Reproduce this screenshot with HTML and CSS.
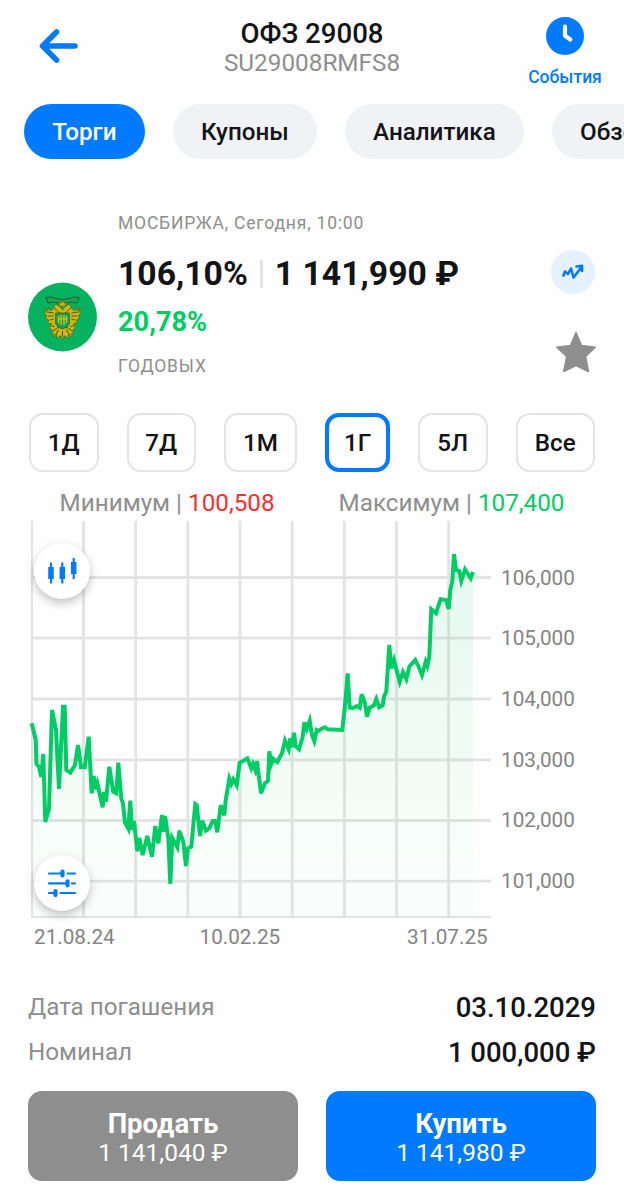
FILE: index.html
```
<!DOCTYPE html>
<html lang="ru">
<head>
	<meta charset="utf-8">
	<title>ОФЗ 29008</title>
	<link rel="stylesheet" href="styles.css">
</head>
<body>

	<div class="header">
		<a class="back">
			<svg width="40" height="36" viewBox="0 0 40 36"><path d="M37 18H5M18.500 4L4.500 18L18.500 32" /></svg>
		</a>
		<div class="title">
			<h1>ОФЗ 29008</h1>
			<p>SU29008RMFS8</p>
		</div>
		<a class="events">
			<svg width="38" height="38" viewBox="0 0 38 38"><circle cx="19" cy="19" r="19"/><path d="M19 9.700V18.700L24.300 22.500"/></svg>
			<span>События</span>
		</a>
	</div>

	<div class="tabs">
		<a class="tab active">Торги</a>
		<a class="tab">Купоны</a>
		<a class="tab">Аналитика</a>
		<a class="tab">Обзор</a>
	</div>

	<div class="quote">
		<svg class="emblem" width="69" height="70" viewBox="0 0 70 70">
			<circle class="disc" cx="35" cy="35" r="35"/>
			<!-- ribbon -->
			<path class="ribbon" d="M18 15.500Q23 13.500 27 16Q35 18.500 43 16Q47 13.500 52 15.500L49.500 21Q45 19 42 20.500Q35 22 28 20.500Q25 19 20.500 21Z"/>
			<!-- wings -->
			<path class="gold" d="M31 29L26 26L23 29L21 25L20 29L17 25L18 30L16.500 31L19 34L17.500 36L21 38L20 41L24 42L22 46L25 49L30 46Z"/>
			<path class="gold" d="M39 29L44 26L47 29L49 25L50 29L53 25L52 30L53.500 31L51 34L52.500 36L49 38L50 41L46 42L48 46L45 49L40 46Z"/>
			<!-- heads and crown -->
			<path class="gold" d="M34 32L30 29L26 25L28 22L32 24L35 28L38 24L42 22L44 25L40 29L36 32Z"/>
			<path class="gold" d="M31 20L33 21L35 18.500L37 21L39 20L38 24H32Z"/>
			<!-- tail -->
			<path class="gold" d="M30 46L23 51L26 52L25 55L29 53L29 57L33 54L35 58L37 54L41 57L41 53L45 55L44 52L47 51L40 46Z"/>
			<!-- shield -->
			<path class="shield" d="M28 31H42V42Q41 45 35 47Q29 45 28 42Z"/>
			<path class="marks" d="M31 34V41M33.500 33V43M36.500 33V43M39 34V41M30 37H40"/>
			<path class="feathers" d="M19 30L26 31M20 34L26 34M22 38L26 37M51 30L44 31M50 34L44 34M48 38L44 37M31 48L28 53M35 49V55M39 48L42 53M24 44L27 45M46 44L43 45"/>
		</svg>
		<div class="info">
			<p class="place">МОСБИРЖА, Сегодня, 10:00</p>
			<p class="price"><span>106,10%</span><i class="bar"></i><span>1 141,990 ₽</span></p>
			<p class="yield">20,78%</p>
			<p class="annual">ГОДОВЫХ</p>
		</div>
		<div class="actions">
			<a class="trend">
				<svg width="22" height="16" viewBox="0 0 22 16"><path d="M1.500 11.500L3 7.500L6 10L9 4.500L11.500 13.500L20 2.500M14.500 2.500L20 1.800L20 7"/></svg>
			</a>
			<svg class="star" width="42" height="42" viewBox="0 0 42 42"><path d="M21 1.500L26.500 14.500L40.200 16.200L30.500 25.500L33.500 40.500L21 34.500L8.700 40.500L11.700 25.500L1.800 16.200L15.500 14.500Z"/></svg>
		</div>
	</div>

	<div class="periods">
		<a>1Д</a>
		<a>7Д</a>
		<a>1М</a>
		<a class="active">1Г</a>
		<a>5Л</a>
		<a>Все</a>
	</div>

	<div class="limits">
		<p>Минимум | <span class="red">100,508</span></p>
		<p>Максимум | <span class="green">107,400</span></p>
	</div>

	<div class="chart">
		<svg width="624" height="440" viewBox="0 520 624 440">
			<defs>
				<linearGradient id="fade" gradientUnits="userSpaceOnUse" x1="0" y1="554" x2="0" y2="917">
					<stop offset="0" stop-color="#0c6" stop-opacity=".1"/>
					<stop offset="1" stop-color="#0c6" stop-opacity=".01"/>
				</linearGradient>
			</defs>
			<path class="grid" d="M83.500 521V916M135.700 521V916M187.800 521V916M240 521V916M292.200 521V916M344.400 521V916M396.500 521V916M448.600 521V916M32 577.500H491M32 638.200H491M32 699H491M32 759.800H491M32 820.500H491M32 881.200H491"/>
			<path class="frame" d="M32 521V917H491"/>
			<path class="area" id="area"/>
			<polyline class="line" id="line" points="31.700,723.300 35.700,740 36.500,764 39,766.700 41.300,776.700 43.300,754 45.300,822 49,809 52,710 56,730 59,789 63,706.700 64.700,706.700 66.300,770 70.300,772.700 75,765 78,745 81,767.300 84.700,767.300 88.700,736.700 91.700,793.300 93.700,776 95.300,789.300 97.300,783.300 102.700,807.300 104,792 106,801.700 109.300,766.700 113.300,791.700 116.300,793.300 118.300,762.700 121.300,798.300 123,803.300 125,822.700 128.300,828.700 130.300,800.700 132,830 134,821 137.300,851.300 139.300,838 142.700,855 147.300,836 152,856.700 155.300,826 158.300,843.300 162,815 163.300,831.700 165,816 168.300,838 170.300,884 172.300,838 177.300,847.300 179.300,830.700 183.300,841.700 186,866 188,848.300 191.300,846.700 195.300,804 196.700,805 200,836 202.300,820.700 206,830.700 209.300,828.300 212.700,821 215,821 217.300,832.300 220.700,805.300 224.300,815.300 225.700,800 229.300,778.700 231.300,784 233.300,779.300 236.700,785.300 239.700,762.700 243.300,760.700 247.300,758.300 251.300,768.300 253,764 255.300,770 257,761 261,793.300 265,783.300 268,780.700 269.300,751.300 271.300,764 273.300,758.700 277.300,762 282,753.300 285,740.700 288.700,749.300 290.300,738.300 292,747.300 294,732.700 295.700,746 299,749.300 302.700,736.700 304.300,722.300 306.700,729 309.700,720.700 312,735 314.300,741 316.700,730 318.500,731 321.700,728.700 325,727.300 327.700,729.300 342.300,730 344.700,708.300 347.700,673.300 349.700,707.700 353.300,708 356.700,706 359.700,707.700 361.700,694.300 365,703.300 367,716.700 369.700,707.700 374,705.300 376.300,699 379.300,707.300 382.700,705.300 384,696.700 386.300,691.700 389.300,645 391.300,668.300 394,660 397,671.700 399.700,681.700 403,672 406.300,679 409.300,666.700 415.300,660 418.700,666.700 422,675 425.700,661.700 427.300,665.700 429.300,656.700 431.300,609.300 436,613.300 438.300,606 440.700,599.300 446,600 448.700,609 450.300,590 452.300,581.700 454,554 456,570 459.300,571 461.300,580.700 465,569.300 470.700,578.300 473,572"/>
			<g class="axis">
				<text x="501" y="584.500">106,000</text>
				<text x="501" y="645.200">105,000</text>
				<text x="501" y="706">104,000</text>
				<text x="501" y="766.700">103,000</text>
				<text x="501" y="827.400">102,000</text>
				<text x="501" y="888">101,000</text>
				<text x="34" y="944">21.08.24</text>
				<text x="199.500" y="944">10.02.25</text>
				<text x="407" y="944">31.07.25</text>
			</g>
		</svg>
		<a class="round candles">
			<svg width="30" height="28" viewBox="0 0 30 28"><path d="M4 5.500V26.500M15.300 5.500V26.500M26.700 1V22"/><path class="body" d="M4 10V22M15.300 10V22M26.700 5V17"/></svg>
		</a>
		<a class="round settings">
			<svg width="28" height="28" viewBox="0 0 28 28"><path d="M1 4.500H14M19.500 4.500H27M1 14.300H18M24 14.300H27M1 24H7M12.500 24H27"/><path class="knob" d="M14.500 2.500V6.500M19.500 12.300V16.300M7.500 22V26"/></svg>
		</a>
	</div>

	<div class="details">
		<p><span>Дата погашения</span><b>03.10.2029</b></p>
		<p><span>Номинал</span><b>1 000,000 ₽</b></p>
	</div>

	<div class="buttons">
		<a class="btn sell"><b>Продать</b><span>1 141,040 ₽</span></a>
		<a class="btn buy"><b>Купить</b><span>1 141,980 ₽</span></a>
	</div>

<script>
	// close the line down to the bottom axis to get the filled area
	var pts = document.getElementById("line").getAttribute("points")
	document.getElementById("area").setAttribute("d", "M" + pts + " 473,917 32,917Z")
</script>
</body>
</html>
```
FILE: styles.css
```
*{
	box-sizing: border-box;
}
body{
	margin: 0;
	width: 624px;
	height: 1200px;
	overflow: hidden;
	background-color: #fefefe;
	color: #131416;
	font-family: Roboto, "Liberation Sans", sans-serif;
}
h1, p{
	margin: 0;
}
svg{
	display: block;
	fill: none;
}
.header{
	display: grid;
	grid-template-columns: 100px 1fr 100px;
	height: 103.5px;
	padding: 16.5px 9px 0 13px;
}
.back{
	padding: 11px 0 0 25px;
}
.back path{
	stroke: #007aff;
	stroke-width: 5.5;
	stroke-linecap: round;
	stroke-linejoin: round;
}
.title{
	text-align: center;
	padding: 2px 4px 0 0;
}
.title h1{
	font-size: 27.6px;
	font-weight: 500;
	line-height: 30px;
}
.title p{
	font-size: 24.3px;
	line-height: 27px;
	color: #8e8e8e;
}
.events{
	display: flex;
	flex-direction: column;
	align-items: center;
	color: #007aff;
	font-size: 17.5px;
	font-weight: 500;
	line-height: 20px;
	gap: 12px;
}
.events circle{
	fill: #007aff;
}
.events path{
	stroke: #fff;
	stroke-width: 4.2;
	stroke-linecap: round;
	stroke-linejoin: round;
}
.tabs{
	display: flex;
	gap: 28px;
	padding-left: 24px;
	overflow: hidden;
}
.tab{
	flex: none;
	height: 55.5px;
	padding: 0 28.2px;
	border-radius: 28px;
	background-color: #f1f2f6;
	font-size: 24.2px;
	font-weight: 500;
	line-height: 56px;
}
.tab.active{
	background-color: #007aff;
	color: #fff;
}
.quote{
	display: flex;
	height: 254px;
	padding: 52px 27px 0 28px;
}
.emblem{
	margin-top: 71px;
}
.disc{
	fill: #06b25f;
}
.gold{
	fill: #d2b414;
	stroke: #4b6b18;
	stroke-width: .8;
}
.ribbon{
	fill: #25a04c;
	stroke: #145c38;
	stroke-width: 1;
}
.shield{
	fill: #14a44f;
	stroke: #37661c;
	stroke-width: .8;
}
.marks{
	stroke: #d8bd20;
	stroke-width: 1.3;
}
.feathers{
	stroke: #46661a;
	stroke-width: 1.1;
}
.info{
	flex: 1;
	padding-left: 21px;
}
.place, .annual{
	font-size: 17.5px;
	line-height: 24px;
	letter-spacing: 0.8px;
	color: #8e8e8e;
}
.price{
	display: flex;
	align-items: center;
	height: 40px;
	margin-top: 18px;
	font-size: 33.7px;
	font-weight: 700;
	white-space: nowrap;
}
.bar{
	width: 3px;
	height: 28px;
	margin: 2px 12px 0 12px;
	background-color: #e4e4e4;
}
.yield{
	margin-top: 13px;
	color: #00cc66;
	font-size: 27.2px;
	font-weight: 700;
	line-height: 32px;
}
.annual{
	margin-top: 16px;
}
.actions{
	display: flex;
	flex-direction: column;
	align-items: flex-end;
	padding-top: 39px;
}
.trend{
	display: flex;
	align-items: center;
	justify-content: center;
	width: 44px;
	height: 44px;
	margin-right: 2px;
	border-radius: 50%;
	background-color: #e5f1fe;
}
.trend path{
	stroke: #007aff;
	stroke-width: 2.6;
	stroke-linejoin: round;
	stroke-linecap: round;
}
.star{
	margin-top: 37px;
}
.star path{
	fill: #8e8e8e;
	stroke: #8e8e8e;
	stroke-width: 1.5;
	stroke-linejoin: round;
}
.periods{
	display: grid;
	grid-template-columns: 69.5px 69.5px 73px 65px 69.5px 79.5px;
	gap: 28px;
	padding-left: 29px;
}
.periods a{
	height: 59px;
	border: 2px solid #e4e4e4;
	border-radius: 14px;
	text-align: center;
	font-size: 24.2px;
	font-weight: 500;
	line-height: 56px;
}
.periods a.active{
	border: 4px solid #007aff;
	line-height: 52px;
}
.limits{
	display: flex;
	justify-content: space-between;
	height: 48px;
	padding: 16px 59.5px 0 59.5px;
	color: #8e8e8e;
	font-size: 24.25px;
	line-height: 30px;
}
.red{
	color: #f5302f;
}
.green{
	color: #00cc66;
}
.chart{
	position: relative;
}
.grid{
	stroke: #e3e3e3;
	stroke-width: 2.8;
}
.frame{
	stroke: #e3e3e3;
	stroke-width: 2;
}
.area{
	fill: url(#fade);
}
.line{
	stroke: #00cc66;
	stroke-width: 4;
}
.axis{
	fill: #848484;
	font-size: 20.7px;
}
.round{
	position: absolute;
	left: 34px;
	display: flex;
	align-items: center;
	justify-content: center;
	width: 56px;
	height: 56px;
	border-radius: 50%;
	background-color: #fff;
	box-shadow: 0 4px 10px rgba(0, 0, 0, 0.24);
}
.candles{
	top: 23px;
}
.settings{
	top: 335px;
}
.round path{
	stroke: #007aff;
	stroke-width: 2.2;
}
.round path.body{
	stroke-width: 5.5;
}
.settings path{
	stroke-linecap: round;
}
.round path.knob{
	stroke-width: 4.2;
}
.details{
	padding: 24px 28px 0;
}
.details p{
	display: flex;
	justify-content: space-between;
	height: 45px;
	line-height: 46px;
	color: #8e8e8e;
	font-size: 24.2px;
}
.details b{
	color: #131416;
	font-size: 27.5px;
	font-weight: 500;
	line-height: 48px;
}
.buttons{
	display: flex;
	gap: 28px;
	padding: 17px 28px 0;
}
.btn{
	flex: 1;
	height: 90px;
	padding-top: 17.5px;
	border-radius: 14px;
	color: #fff;
	text-align: center;
	font-size: 24.5px;
	line-height: 28px;
}
.btn b, .btn span{
	display: block;
}
.btn b{
	font-size: 27.5px;
	font-weight: 700;
	line-height: 30px;
}
.sell{
	background-color: #8e8e8e;
}
.buy{
	background-color: #007aff;
}
```
